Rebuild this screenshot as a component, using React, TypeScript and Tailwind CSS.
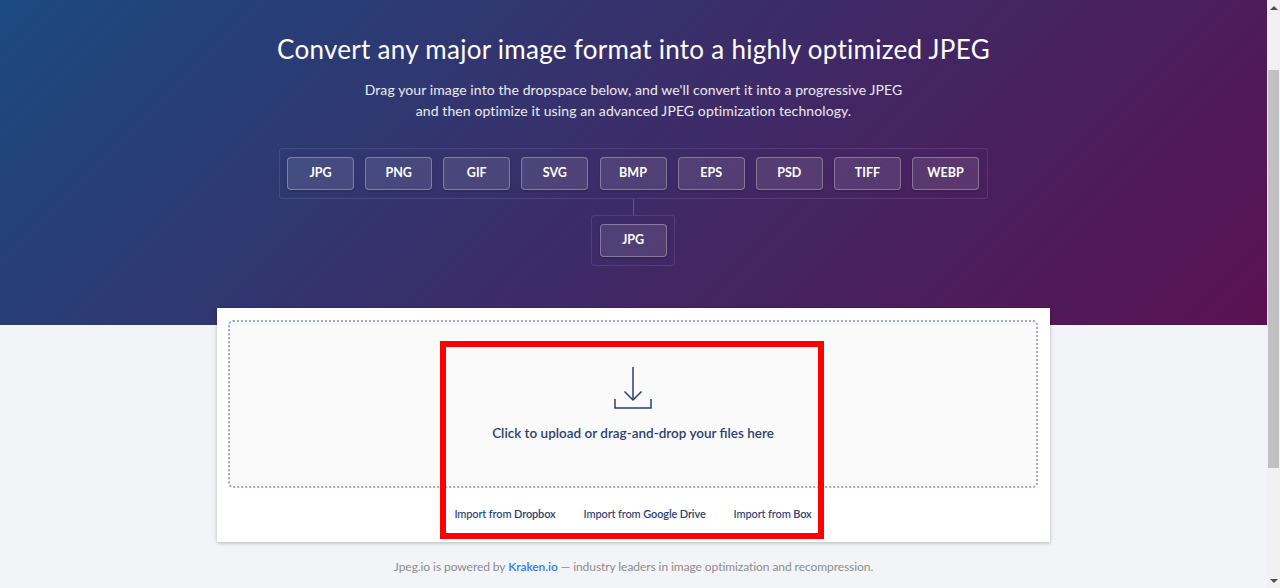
const formats = ["JPG", "PNG", "GIF", "SVG", "BMP", "EPS", "PSD", "TIFF", "WEBP"];

const FormatButton = ({ label }: { label: string }) => (
  <div className="flex h-[33px] w-[67px] items-center justify-center rounded-[4px] border border-white/30 bg-white/10 text-[12.5px] font-bold text-white shadow-[0_1px_2px_rgba(0,0,0,0.25)]">
    {label}
  </div>
);

const Scrollbar = () => (
  <div className="flex h-full w-[13px] shrink-0 flex-col bg-[#f1f1f1]">
    <div className="flex h-[15px] shrink-0 items-center justify-center">
      <div className="h-0 w-0 border-x-[4px] border-b-[4px] border-x-transparent border-b-[#505050]" />
    </div>
    <div className="mx-[1px] mt-[55px] h-[398px] bg-[#c1c1c1]" />
    <div className="mt-auto flex h-[15px] shrink-0 items-center justify-center">
      <div className="h-0 w-0 border-x-[4px] border-t-[4px] border-x-transparent border-t-[#505050]" />
    </div>
  </div>
);

export default function App() {
  return (
    <div className="flex h-[588px] w-full overflow-hidden bg-[#f3f4f7] font-['Lato',sans-serif]">
      <div className="relative min-w-0 flex-1">
        <header className="flex h-[325px] flex-col items-center bg-[linear-gradient(135deg,#1b4a80,#3c2c68_50%,#5a1152)] pt-[32px] text-white">
          <h1 className="text-[26px] leading-[34px] font-normal tracking-[0.28px]">
            Convert any major image format into a highly optimized JPEG
          </h1>
          <p className="mt-[13px] text-center text-[14px] leading-[21px] tracking-[0.1px] text-white/90">
            Drag your image into the dropspace below, and we'll convert it into a progressive JPEG
            <br />
            and then optimize it using an advanced JPEG optimization technology.
          </p>
          <div className="mt-[27px] mr-px flex h-[51px] w-[709px] items-center justify-center gap-[11.125px] rounded-[3px] border border-white/10">
            {formats.map((f) => (
              <FormatButton key={f} label={f} />
            ))}
          </div>
          <div className="h-[16px] w-px bg-white/20" />
          <div className="mr-px flex h-[51px] w-[84px] items-center justify-center rounded-[3px] border border-white/10">
            <FormatButton label="JPG" />
          </div>
        </header>

        <section className="relative mx-auto mt-[-17px] flex h-[234px] w-[833px] flex-col bg-white pt-[12px] pr-[12px] pl-[11px] shadow-[0_1px_4px_rgba(0,0,0,0.25)]">
          <div className="flex h-[168px] flex-col items-center rounded-[5px] border-2 border-dotted border-[#9fa7cc] bg-[#fafafb] pt-[45px] text-[#2c3e6e]">
            <svg className="mr-px" width="38" height="42" viewBox="0 0 38 42" fill="none" stroke="#2a3f78" strokeWidth="1.5">
              <path d="M19 0V33" />
              <path d="M10.5 24.5L19 33L27.5 24.5" />
              <path d="M1 32V41H37V32" />
            </svg>
            <p className="mt-[14px] text-[13.5px] leading-5 font-semibold">
              Click to upload or drag-and-drop your files here
            </p>
          </div>
          <div className="mt-[18px] flex justify-center gap-[28px] text-[11px] leading-4 font-medium tracking-[-0.13px] text-[#2c3e6e]">
            <span>Import from <span className="font-semibold">Dropbox</span></span>
            <span>Import from <span className="font-semibold">Google Drive</span></span>
            <span>Import from <span className="font-semibold">Box</span></span>
          </div>
        </section>

        <p className="mt-[15px] text-center text-[12px] leading-5 tracking-[-0.07px] text-[#8c8c8c]">
          Jpeg.io is powered by <span className="font-semibold text-[#2f80ed]">Kraken.io</span> — industry leaders in image optimization and recompression.
        </p>

        <div className="pointer-events-none absolute top-[341px] left-[440px] h-[198px] w-[384px] border-[6px] border-[#ff0000]" />
      </div>
      <Scrollbar />
    </div>
  );
}
